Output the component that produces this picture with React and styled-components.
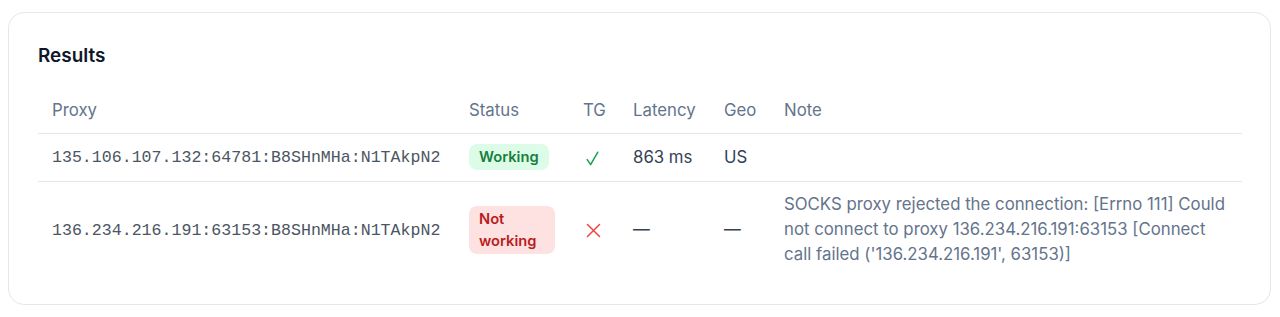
import React from "react";
import styled, { createGlobalStyle } from "styled-components";

const GlobalStyle = createGlobalStyle`
  html, body {
    margin: 0;
    padding: 0;
    background: #ffffff;
  }
  body {
    font-family: Inter, "Noto Sans", "Liberation Sans", sans-serif;
    -webkit-font-smoothing: antialiased;
  }
`;

const Page = styled.div`
  padding: 12px 9px 0 8px;
`;

const Card = styled.section`
  border: 1px solid #e5e7eb;
  border-radius: 16px;
  background: #ffffff;
  padding: 29px 28px 26px 29px;
`;

const Title = styled.h2`
  margin: 0;
  font-size: 18.9px;
  line-height: 28px;
  font-weight: 600;
  color: #0f172a;
`;

const Table = styled.table`
  margin-top: 15px;
  width: 100%;
  border-collapse: collapse;
  table-layout: fixed;
`;

const Th = styled.th`
  text-align: left;
  font-weight: 400;
  font-size: 16.8px;
  line-height: 24px;
  color: #64748b;
  padding: 13px 14px 11px;
  border-bottom: 1px solid #e2e8f0;
`;

const Row = styled.tr`
  border-bottom: ${(p) => (p.$last ? "none" : "1px solid #e2e8f0")};
`;

const Td = styled.td`
  padding: 10px 14px 11px;
  vertical-align: middle;
  font-size: 16.8px;
  line-height: 25px;
  color: ${(p) => (p.$muted ? "#64748b" : "#334155")};
`;

const Mono = styled.span`
  font-family: "Liberation Mono", "Courier New", monospace;
  font-size: 16.6px;
  color: #4b5563;
  white-space: nowrap;
`;

const Badge = styled.span`
  display: inline-block;
  vertical-align: middle;
  padding: 2px 10px;
  border-radius: 8px;
  font-size: 14.7px;
  line-height: 1.5;
  font-weight: 600;
  background: ${(p) => (p.$ok ? "#dcfce7" : "#fee2e2")};
  color: ${(p) => (p.$ok ? "#15803d" : "#b91c1c")};
`;

const IconWrap = styled.span`
  display: inline-flex;
  vertical-align: middle;
  margin-left: 3px;
`;

const CheckIcon = () => (
  <svg width="13" height="15" viewBox="0 0 13 15" fill="none">
    <path
      d="M1.2 8.6 L4.6 13.6 L11.8 1.2"
      stroke="#16a34a"
      strokeWidth="1.5"
      strokeLinecap="round"
      strokeLinejoin="round"
    />
  </svg>
);

const CrossIcon = () => (
  <svg width="15" height="15" viewBox="0 0 15 15" fill="none">
    <path
      d="M1.5 1.5 L13.5 13.5 M13.5 1.5 L1.5 13.5"
      stroke="#ef4444"
      strokeWidth="1.5"
      strokeLinecap="round"
    />
  </svg>
);

const rows = [
  {
    proxy: "135.106.107.132:64781:B8SHnMHa:N1TAkpN2",
    ok: true,
    latency: "863 ms",
    geo: "US",
    note: "",
  },
  {
    proxy: "136.234.216.191:63153:B8SHnMHa:N1TAkpN2",
    ok: false,
    latency: "—",
    geo: "—",
    note:
      "SOCKS proxy rejected the connection: [Errno 111] Could not connect to proxy 136.234.216.191:63153 [Connect call failed ('136.234.216.191', 63153)]",
  },
];

export default function App() {
  return (
    <Page>
      <GlobalStyle />
      <Card>
        <Title>Results</Title>
        <Table>
          <colgroup>
            <col style={{ width: 417 }} />
            <col style={{ width: 114 }} />
            <col style={{ width: 50 }} />
            <col style={{ width: 91 }} />
            <col style={{ width: 60 }} />
            <col />
          </colgroup>
          <thead>
            <tr>
              <Th>Proxy</Th>
              <Th>Status</Th>
              <Th>TG</Th>
              <Th>Latency</Th>
              <Th>Geo</Th>
              <Th>Note</Th>
            </tr>
          </thead>
          <tbody>
            {rows.map((r, i) => (
              <Row key={r.proxy} $last={i === rows.length - 1}>
                <Td>
                  <Mono>{r.proxy}</Mono>
                </Td>
                <Td>
                  <Badge $ok={r.ok}>{r.ok ? "Working" : "Not working"}</Badge>
                </Td>
                <Td>
                  <IconWrap>{r.ok ? <CheckIcon /> : <CrossIcon />}</IconWrap>
                </Td>
                <Td>{r.latency}</Td>
                <Td>{r.geo}</Td>
                <Td $muted>{r.note}</Td>
              </Row>
            ))}
          </tbody>
        </Table>
      </Card>
    </Page>
  );
}
